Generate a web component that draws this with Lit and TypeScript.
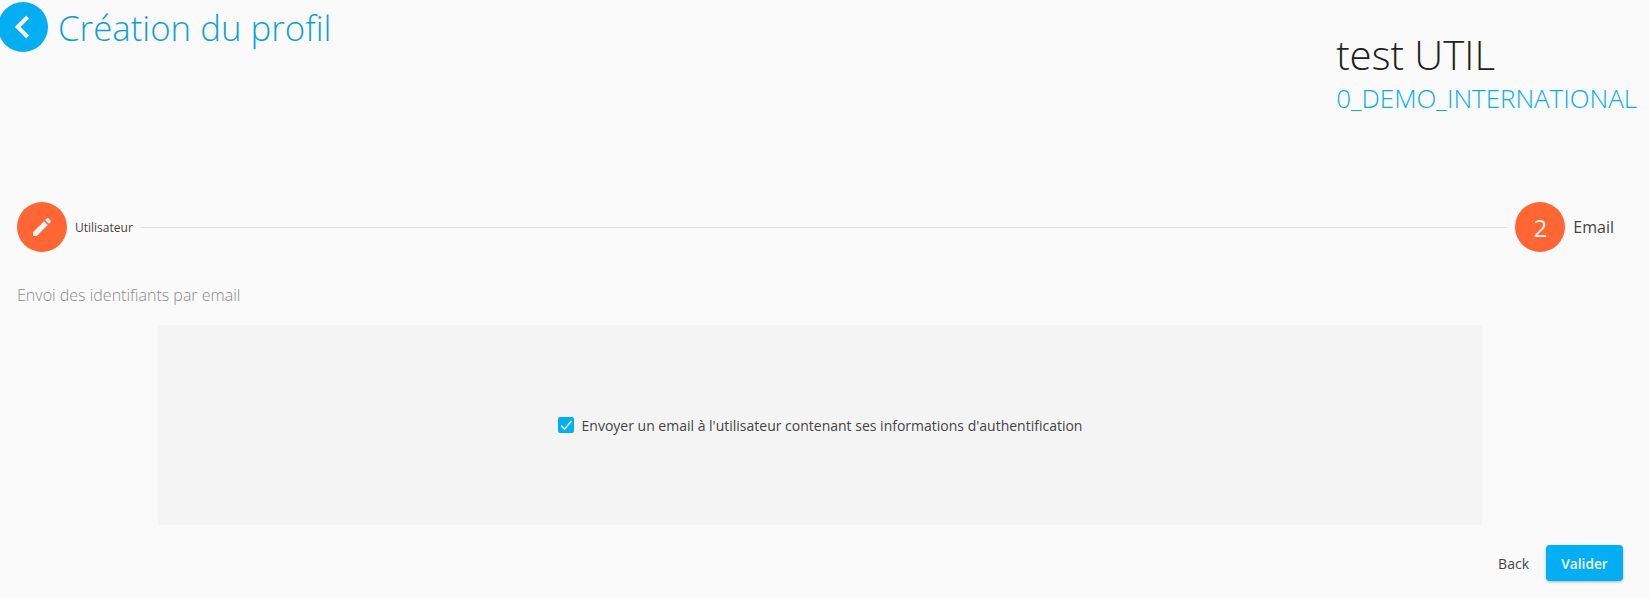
import { LitElement, html, css } from "lit";
import { customElement } from "lit/decorators.js";

@customElement("app-root")
export class AppRoot extends LitElement {
  static styles = css`
    :host {
      display: block;
      width: 1649px;
      height: 598px;
      overflow: hidden;
      background: #fafafa;
      font-family: "Open Sans", sans-serif;
      color: #333;
    }
    .header {
      display: flex;
      justify-content: space-between;
      align-items: flex-start;
      height: 202px;
      padding: 2px 12px 0 0;
      box-sizing: border-box;
    }
    .title-wrap {
      display: flex;
      align-items: center;
      gap: 10px;
      margin-left: -2px;
    }
    .back {
      width: 50px;
      height: 50px;
      border-radius: 50%;
      background: #03aef3;
      display: flex;
      align-items: center;
      justify-content: center;
    }
    h1 {
      margin: 0;
      height: 50px;
      font-size: 34.8px;
      font-weight: 300;
      line-height: 52px;
      color: #0d9fdc;
    }
    .user {
      margin-top: 28px;
      display: flex;
      flex-direction: column;
    }
    .user-name {
      font-size: 40.2px;
      font-weight: 300;
      line-height: 50px;
      color: #212121;
    }
    .org {
      font-size: 25.9px;
      font-weight: 300;
      line-height: 36px;
      color: #03aef3;
    }
    .stepper {
      display: flex;
      align-items: center;
      padding: 0 35px 0 17px;
      height: 50px;
    }
    .circle {
      width: 50px;
      height: 50px;
      flex: none;
      border-radius: 50%;
      background: #ff6633;
      color: #f5f5f5;
      display: flex;
      align-items: center;
      justify-content: center;
      font-size: 24px;
    }
    .label-small {
      font-size: 12px;
      margin-left: 8px;
      color: #444;
    }
    .label {
      font-size: 16px;
      margin-left: 8px;
      color: #444;
    }
    .line {
      flex: 1;
      height: 1px;
      background: #dcdcdc;
      margin: 0 8px;
    }
    .section {
      margin: 0;
      padding: 31px 0 0 17px;
      height: 42px;
      font-size: 16px;
      font-weight: 300;
      line-height: 24px;
      color: #8a8a8a;
    }
    .panel {
      margin-left: 158px;
      width: 1324px;
      height: 200px;
      background: #f4f4f4;
      display: flex;
      align-items: center;
      justify-content: center;
      gap: 8px;
      font-size: 14px;
      color: #444;
    }
    .check {
      width: 16px;
      height: 16px;
      border-radius: 2px;
      background: #03aef3;
      display: flex;
    }
    .actions {
      display: flex;
      justify-content: flex-end;
      align-items: center;
      gap: 17px;
      padding: 20px 26px 0 0;
    }
    .back-btn {
      font-size: 14px;
      color: #444;
    }
    .submit {
      width: 77px;
      height: 36px;
      border-radius: 4px;
      background: #03aef3;
      color: #f0f8ff;
      font-size: 13.7px;
      font-weight: 600;
      display: flex;
      align-items: center;
      justify-content: center;
      box-shadow: 0 1px 3px rgba(0, 0, 0, 0.3);
    }
  `;

  render() {
    return html`
      <div class="header">
        <div class="title-wrap">
          <div class="back">
            <svg width="32" height="32" viewBox="0 0 24 24">
              <path d="M15.5 4.5 L8 12 L15.5 19.5" fill="none" stroke="#f5f5f5" stroke-width="3" />
            </svg>
          </div>
          <h1>Création du profil</h1>
        </div>
        <div class="user">
          <div class="user-name">test UTIL</div>
          <div class="org">0_DEMO_INTERNATIONAL</div>
        </div>
      </div>
      <div class="stepper">
        <div class="circle">
          <svg width="24" height="24" viewBox="0 0 24 24">
            <path fill="#f5f5f5" d="M3 17.25V21h3.75L17.81 9.94l-3.75-3.75L3 17.25zM20.71 7.04a1 1 0 0 0 0-1.41l-2.34-2.34a1 1 0 0 0-1.41 0l-1.83 1.83 3.75 3.75 1.83-1.83z" />
          </svg>
        </div>
        <span class="label-small">Utilisateur</span>
        <div class="line"></div>
        <div class="circle">2</div>
        <span class="label">Email</span>
      </div>
      <p class="section">Envoi des identifiants par email</p>
      <div class="panel">
        <div class="check">
          <svg width="16" height="16" viewBox="0 0 16 16">
            <path d="M3.2 8.5 L6.5 12.2 L13.4 4" fill="none" stroke="#fff" stroke-width="1.4" />
          </svg>
        </div>
        <span>Envoyer un email à l'utilisateur contenant ses informations d'authentification</span>
      </div>
      <div class="actions">
        <span class="back-btn">Back</span>
        <div class="submit">Valider</div>
      </div>
    `;
  }
}
